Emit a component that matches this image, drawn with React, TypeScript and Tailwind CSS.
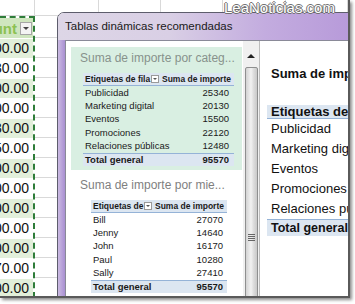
import React from 'react';

const sheetValues = [
  '1200.00', '1830.00', '2000.00', '1500.00', '2130.00', '1250.00', '1600.00',
  '2400.00', '1800.00', '3000.00', '2100.00', '1370.00', '1900.00',
];

const categoryRows = [
  ['Publicidad', '25340'],
  ['Marketing digital', '20130'],
  ['Eventos', '15500'],
  ['Promociones', '22120'],
  ['Relaciones públicas', '12480'],
];

const personRows = [
  ['Bill', '27070'],
  ['Jenny', '14640'],
  ['John', '16170'],
  ['Paul', '10280'],
  ['Sally', '27410'],
];

function FilterButton() {
  return (
    <div className="w-[8px] h-[8px] shrink-0 bg-white border border-[#9a9a9a] flex items-center justify-center">
      <div className="w-0 h-0 border-l-[2px] border-r-[2px] border-t-[2px] border-l-transparent border-r-transparent border-t-[#555]" />
    </div>
  );
}

// small pivot table drawn inside a thumbnail card
function ThumbTable({ rows, label, firstCol, width, numPad }: { rows: string[][]; label: string; firstCol: string; width: string; numPad: string }) {
  return (
    <div className={`${width} text-[9.5px] text-[#1a1a1a]`}>
      <div className="flex h-[13px] items-center bg-[#dce6f1] border-b border-[#95b3d7] font-bold text-[8.5px]">
        <div className={`${firstCol} shrink-0 flex items-center pl-[2px] pr-[1px] overflow-hidden`}>
          <span className="flex-1 overflow-hidden whitespace-nowrap">{label}</span>
          <FilterButton />
        </div>
        <div className="flex-1 pl-[2px] whitespace-nowrap overflow-hidden">Suma de importe</div>
      </div>
      {rows.map(([name, value]) => (
        <div key={name} className="flex h-[13.4px] items-center">
          <div className="flex-1 pl-[2px] whitespace-nowrap">{name}</div>
          <div className={numPad}>{value}</div>
        </div>
      ))}
      <div className="flex h-[13.4px] items-center bg-[#dce6f1] border-t border-[#95b3d7] font-bold">
        <div className="flex-1 pl-[2px]">Total general</div>
        <div className={numPad}>95570</div>
      </div>
    </div>
  );
}

function Spreadsheet() {
  return (
    <div className="flex flex-col">
      <div className="flex h-[16px] border-b border-[#d9d9d9]">
        <div className="w-[35px] border-r border-[#d9d9d9]" />
        <div className="w-[65px] border-r border-[#d9d9d9]" />
        <div className="w-[63px] border-r border-[#d9d9d9]" />
        <div className="w-[63px] border-r border-[#d9d9d9]" />
        <div className="w-[63px] border-r border-[#d9d9d9]" />
        <div className="w-[63px] border-r border-[#d9d9d9]" />
      </div>
      <div className="flex">
        <div className="w-[35px] shrink-0 border-t-2 border-r-2 border-dashed border-[#2f7d3a] flex flex-col">
          <div className="h-[20px] bg-[#cfe6bf] flex items-center justify-end overflow-hidden pr-[1px] gap-[3px]">
            <span className="text-[15px] font-bold text-[#8cc152] whitespace-nowrap leading-none">Amount</span>
            <div className="w-[12px] h-[13px] shrink-0 bg-[#f4f4f4] border border-[#a6a6a6] flex items-center justify-center">
              <div className="w-0 h-0 border-l-[3px] border-r-[3px] border-t-[3px] border-l-transparent border-r-transparent border-t-[#444]" />
            </div>
          </div>
          {sheetValues.map((v, i) => (
            <div
              key={i}
              className={`h-[20px] flex items-center justify-end overflow-hidden pr-[4px] border-t border-white ${i % 2 === 0 ? 'bg-[#e2efda]' : 'bg-white'}`}
            >
              <span className="text-[14px] text-[#111] whitespace-nowrap">{v}</span>
            </div>
          ))}
        </div>
        <div className="w-[65px] flex flex-col">
          <div className="h-[22px] border-b border-[#d9d9d9]" />
          {sheetValues.map((_, i) => (
            <div key={i} className="h-[20px] border-b border-[#d9d9d9]" />
          ))}
        </div>
      </div>
    </div>
  );
}

function Scrollbar() {
  return (
    <div className="w-[17px] shrink-0 bg-[#f0f0f0] border-r border-[#bdbdbd] flex flex-col items-center pt-[13px]">
      <div className="w-0 h-0 border-l-[4px] border-r-[4px] border-b-[4px] border-l-transparent border-r-transparent border-b-[#222]" />
      <div className="mt-[9px] w-[13px] h-[340px] shrink-0 rounded-[2px] border border-[#8e8f8f] bg-[linear-gradient(90deg,#d3d3d3_0%,#f2f2f2_45%,#dcdcdc_70%,#c9c9c9_100%)] flex flex-col items-center justify-center gap-[1px]">
        <div className="w-[7px] h-[1px] bg-[#666]" />
        <div className="w-[7px] h-[1px] bg-[#666]" />
        <div className="w-[7px] h-[1px] bg-[#666]" />
        <div className="w-[7px] h-[1px] bg-[#666]" />
      </div>
    </div>
  );
}

function Preview() {
  return (
    <div className="flex-1 bg-white pl-[7px] pt-[25px] text-[#111]">
      <div className="ml-[4px] text-[13px] font-bold leading-[16px] whitespace-nowrap">Suma de importe por categoría</div>
      <div className="mt-[23px] w-[220px]">
        <div className="h-[14px] flex items-center bg-[#dce6f1] border-b border-[#95b3d7] pl-[4px] text-[13px] font-bold whitespace-nowrap">
          Etiquetas de fila
        </div>
        {categoryRows.map(([name]) => (
          <div key={name} className="h-[20px] flex items-center pl-[4px] text-[13px] whitespace-nowrap">
            {name}
          </div>
        ))}
        <div className="h-[17px] flex items-center bg-[#dce6f1] border-t border-[#95b3d7] pl-[4px] text-[12.5px] font-bold whitespace-nowrap">
          Total general
        </div>
      </div>
    </div>
  );
}

function RecommendedDialog() {
  return (
    <div className="absolute left-[57px] top-[12px] w-[320px] h-[300px] border border-[#5d5d6c] rounded-t-[7px] overflow-hidden flex flex-col">
      <div className="h-[27px] shrink-0 flex items-center pl-[7px] bg-[linear-gradient(90deg,#ddd6e6_0%,#d9cfe5_35%,#c3acdf_65%,#b495d8_100%)]">
        <span className="text-[11.5px] text-[#1a1a1a] whitespace-nowrap">Tablas dinámicas recomendadas</span>
      </div>
      <div className="flex flex-1">
        <div className="w-[7px] shrink-0 bg-[linear-gradient(90deg,#cbbbe2_0%,#a98fd2_100%)]" />
        <div className="flex-1 flex border-l border-t border-[#8a8a98] bg-[#f0f0f0]">
          <div className="w-[177px] shrink-0 bg-white pl-[5px] pt-[6px]">
            <div className="w-[171px] h-[123px] bg-[#d9efe2] pt-[4px]">
              <div className="pl-[9px] text-[12px] leading-[14px] text-[#87928c] whitespace-nowrap">Suma de importe por categ...</div>
              <div className="mt-[8px] ml-[12px]">
                <ThumbTable rows={categoryRows} label="Etiquetas de fila" firstCol="w-[77px]" width="w-[151px]" numPad="pr-[5px]" />
              </div>
            </div>
            <div className="w-[171px] pt-[8px]">
              <div className="pl-[9px] text-[12px] leading-[14px] text-[#7f7f7f] whitespace-nowrap">Suma de importe por mie...</div>
              <div className="mt-[8px] ml-[20px]">
                <ThumbTable rows={personRows} label="Etiquetas de fila" firstCol="w-[62px]" width="w-[136px]" numPad="pr-[4px]" />
              </div>
            </div>
          </div>
          <Scrollbar />
          <Preview />
        </div>
      </div>
    </div>
  );
}

export default function App() {
  return (
    <div className="w-[355px] h-[304px] bg-white font-['Liberation_Sans',Arial,sans-serif]">
      <div className="relative w-[350px] h-[298px] overflow-hidden bg-white border-r-2 border-b-2 border-[#5a5a5a] shadow-[2px_2px_3px_rgba(0,0,0,0.45)]">
        <Spreadsheet />
        <RecommendedDialog />
        <div className="absolute left-[224px] top-[-3px] text-[15px] text-white whitespace-nowrap [text-shadow:1px_0_0_#707070,-1px_0_0_#707070,0_1px_0_#707070,0_-1px_0_#707070]">
          LeaNoticias.com
        </div>
      </div>
    </div>
  );
}
